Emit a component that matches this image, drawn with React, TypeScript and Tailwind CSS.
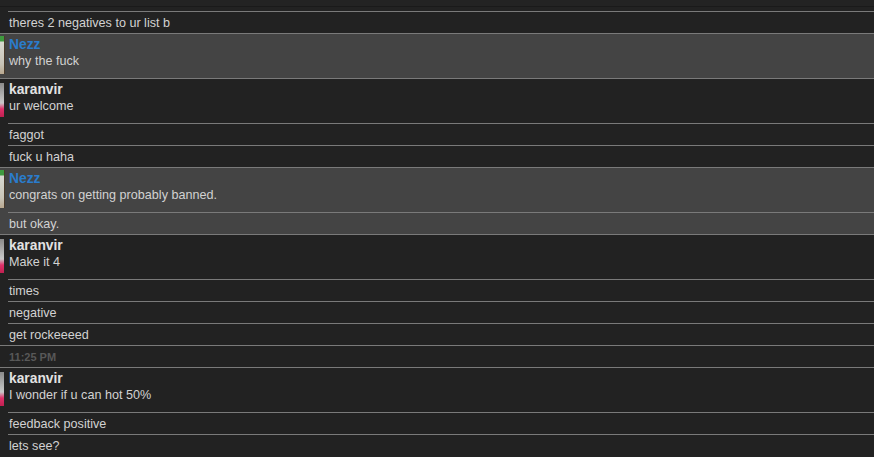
import React from 'react';

type Group =
  | { kind: 'time'; text: string }
  | { kind: 'msg'; author?: 'Nezz' | 'karanvir'; lines: string[]; cont?: boolean };

const groups: Group[] = [
  { kind: 'msg', cont: true, lines: ['theres 2 negatives to ur list b'] },
  { kind: 'msg', author: 'Nezz', lines: ['why the fuck'] },
  { kind: 'msg', author: 'karanvir', lines: ['ur welcome', 'faggot', 'fuck u haha'] },
  { kind: 'msg', author: 'Nezz', lines: ['congrats on getting probably banned.', 'but okay.'] },
  { kind: 'msg', author: 'karanvir', lines: ['Make it 4', 'times', 'negative', 'get rockeeeed'] },
  { kind: 'time', text: '11:25 PM' },
  { kind: 'msg', author: 'karanvir', lines: ['I wonder if u can hot 50%', 'feedback positive', 'lets see?'] },
];

function Avatar({ who }: { who: 'Nezz' | 'karanvir' }) {
  if (who === 'Nezz') {
    return (
      <div className="mt-[2px] h-[38px] w-[5px] border-r border-[#4a3a2a] bg-[linear-gradient(to_bottom,#3f9a3f_0px,#3f9a3f_5px,#d8d8d0_6px,#c8c4b8_28px,#b8a890_38px)]" />
    );
  }
  return (
    <div className="mt-[4px] h-[34px] w-[4px] bg-[linear-gradient(to_bottom,#8a8a8a_0px,#b0b0b0_12px,#c8c8c8_20px,#e0306a_26px,#c02050_34px)]" />
  );
}

export default function App() {
  return (
    <div
      className="h-[457px] w-[874px] overflow-hidden bg-[#222222] text-[12.6px] text-[#d2d2d2]"
      style={{ fontFamily: '"Liberation Sans", Arial, sans-serif' }}
    >
      <div className="h-[6px] bg-[#232323]" />
      <div className="h-px bg-[#1a1a1a]" />
      <div className="h-[4px]" />
      {groups.map((g, i) => {
        if (g.kind === 'time') {
          return (
            <div key={i} className="flex h-[22px] items-center border-t border-[#7a7a7a] pl-[9px] pt-[2px] text-[11px] font-bold text-[#585858]">
              {g.text}
            </div>
          );
        }
        const gray = g.author === 'Nezz';
        return (
          <div
            key={i}
            className={`flex ${g.cont ? '' : 'border-t border-[#7a7a7a]'} ${gray ? 'bg-[#444444]' : ''}`}
          >
            <div className="w-2 shrink-0">{g.author && <Avatar who={g.author} />}</div>
            <div className="flex-1">
              {g.lines.map((line, j) => {
                if (j === 0 && g.author) {
                  return (
                    <div key={j} className="h-[44px] pl-px pt-[3px]">
                      <div
                        className={`h-[16px] text-[13.8px] font-bold leading-[16px] ${
                          g.author === 'Nezz' ? 'text-[#2a7ccc]' : 'text-[#e2e2e2]'
                        }`}
                      >
                        {g.author}
                      </div>
                      <div className="h-[16px] leading-[16px]">{line}</div>
                    </div>
                  );
                }
                return (
                  <div
                    key={j}
                    className={`flex h-[22px] items-center pl-px pt-[2px] ${j > 0 || g.cont ? 'border-t border-[#7a7a7a]' : ''}`}
                  >
                    {line}
                  </div>
                );
              })}
            </div>
          </div>
        );
      })}
    </div>
  );
}
